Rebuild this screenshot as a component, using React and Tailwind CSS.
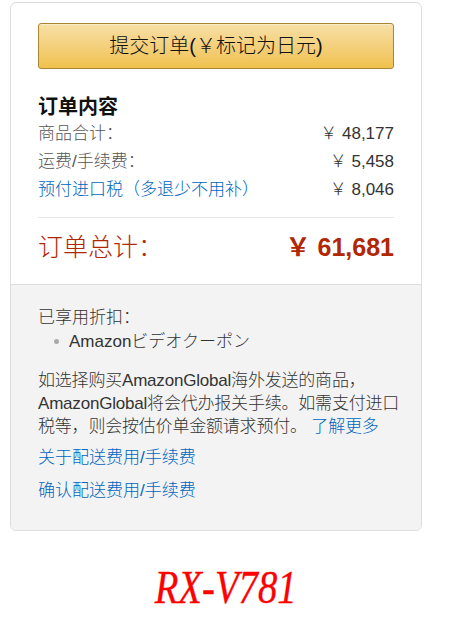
export default function App() {
  const rows = [
    { label: '商品合计：', value: '￥ 48,177' },
    { label: '运费/手续费：', value: '￥ 5,458' },
    { label: '预付进口税（多退少不用补）', value: '￥ 8,046', link: true },
  ]

  return (
    <div
      className="min-h-[619px] w-[452px] bg-white pt-[2px] font-light"
      style={{ fontFamily: '"Liberation Sans", "Noto Sans CJK SC", sans-serif' }}
    >
      <div className="ml-[10px] w-[412px] overflow-hidden rounded-[6px] border border-[#dddddd] bg-white">
        {/* order summary */}
        <div className="px-[27px] pt-[20px] pb-[21px]">
          <button className="flex h-[46px] w-full items-center justify-center rounded-[3px] border border-[#a88734] bg-gradient-to-b from-[#f7dfa5] to-[#f0c14b] text-[20px] font-light text-[#111111] shadow-[inset_0_1px_0_rgba(255,255,255,0.4)]">
            提交订单(￥标记为日元)
          </button>

          <h2 className="mt-[26px] text-[20px] leading-[24px] font-bold text-[#111111]">订单内容</h2>

          <div className="mt-[1px]">
            {rows.map(r => (
              <div key={r.label} className="flex justify-between text-[17px] leading-[28px]">
                <span className={r.link ? 'text-[#0066c0]' : 'text-[#555555]'}>{r.label}</span>
                <span className="text-[#333333]">{r.value}</span>
              </div>
            ))}
          </div>

          <div className="mt-[13px] h-px bg-[#e7e7e7]" />

          <div className="mt-[13px] flex items-center justify-between leading-[32px] text-[#b12704]">
            <span className="text-[25px]">订单总计：</span>
            <span className="text-[25px] font-bold">￥ 61,681</span>
          </div>
        </div>

        {/* discounts and notes */}
        <div className="border-t border-[#dddddd] bg-[#f3f3f3] px-[27px] pt-[21px] pb-[23px] text-[17px] text-[#333333]">
          <div className="leading-[24px]">已享用折扣：</div>
          <div className="flex items-center leading-[23px]">
            <span className="ml-[16px] mr-[10px] h-[5px] w-[5px] rounded-full bg-[#aaaaaa]" />
            <span>Amazonビデオクーポン</span>
          </div>

          <p className="mt-[16px] whitespace-nowrap leading-[23px] tracking-[-0.2px]">
            如选择购买AmazonGlobal海外发送的商品，
            <br />
            AmazonGlobal将会代办报关手续。如需支付进口
            <br />
            税等，则会按估价单金额请求预付。 <span className="text-[#0066c0]">了解更多</span>
          </p>

          <div className="mt-[3px] leading-[33px] text-[#0066c0]">
            <div>关于配送费用/手续费</div>
            <div>确认配送费用/手续费</div>
          </div>
        </div>
      </div>

      <div className="mt-[32px] flex justify-center">
        <span
          className="inline-block scale-x-[0.88] scale-y-[1.05] text-[44px] leading-[50px] italic text-[#ff0000]"
          style={{ fontFamily: '"Liberation Serif", serif', WebkitTextStroke: '0.3px #ff0000' }}
        >
          RX-V781
        </span>
      </div>
    </div>
  )
}
